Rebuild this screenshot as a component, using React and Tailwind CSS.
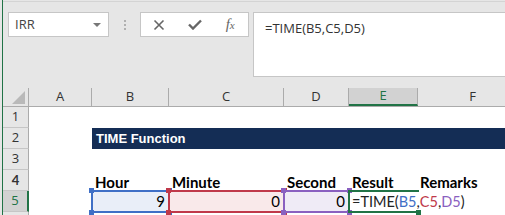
import React from 'react';

const COLS = [
  { key: 'A', w: 'w-[63px]' },
  { key: 'B', w: 'w-[77px]' },
  { key: 'C', w: 'w-[115px]' },
  { key: 'D', w: 'w-[65px]' },
  { key: 'E', w: 'w-[69px]' },
  { key: 'F', w: 'w-[110px]' },
];

const RowHead = ({ n, active }) => (
  <div
    className={
      active
        ? 'w-[26px] shrink-0 h-full flex items-center justify-center bg-[#d2d2d2] text-[#217346] border-r-2 border-r-[#217346] border-b border-b-[#c6c6c6] text-[13px]'
        : 'w-[26px] shrink-0 h-full flex items-center justify-center bg-[#e6e6e6] text-[#333] border-r border-r-[#ababab] border-b border-b-[#c6c6c6] text-[13px]'
    }
  >
    {n}
  </div>
);

const Corner = ({ color, pos }) => (
  <span className={`absolute w-[5px] h-[5px] ${color} ${pos}`} />
);

const RangeCell = ({ w, fill, border, square, value }) => (
  <div className={`relative ${w} shrink-0 h-full ${fill}`}>
    <div className={`absolute -inset-px border-2 ${border}`} />
    <Corner color={square} pos="-top-[3px] -left-[3px]" />
    <Corner color={square} pos="-top-[3px] -right-[3px]" />
    <Corner color={square} pos="-bottom-[3px] -left-[3px]" />
    <Corner color={square} pos="-bottom-[3px] -right-[3px]" />
    <div className="relative h-full flex items-center justify-end pr-[4px] font-['Lato',sans-serif] text-[15px] text-black">
      {value}
    </div>
  </div>
);

export default function App() {
  return (
    <div className="w-[505px] h-[215px] overflow-hidden flex bg-[#e6e6e6] font-['Open_Sans',sans-serif]">
      <div className="w-[2px] shrink-0 bg-[#e6e6e6]" />
      <div className="w-[1px] shrink-0 bg-[#217346]" />
      <div className="flex-1 flex flex-col min-w-0">
        {/* toolbar */}
        <div className="h-[88px] shrink-0 flex flex-col">
          <div className="h-px mt-px bg-[#d4d4d4]" />
          <div className="flex items-start mt-[10px] ml-[5px]">
            <div className="w-[101px] h-[25px] shrink-0 bg-white border border-[#c6c6c6] flex items-center justify-between pl-[6px] pr-[7px]">
              <span className="text-[13px] text-[#444]">IRR</span>
              <span className="w-0 h-0 border-l-[4px] border-r-[4px] border-t-[4px] border-l-transparent border-r-transparent border-t-[#777]" />
            </div>
            <div className="flex flex-col gap-[2px] ml-[15px] mt-[8px]">
              <span className="w-[2px] h-[2px] bg-[#b0b0b0]" />
              <span className="w-[2px] h-[2px] bg-[#b0b0b0]" />
              <span className="w-[2px] h-[2px] bg-[#b0b0b0]" />
            </div>
            <div className="w-[109px] h-[25px] shrink-0 ml-[14px] bg-white border border-[#c6c6c6] flex items-center">
              <div className="w-[36px] flex justify-center">
                <svg width="12" height="12" viewBox="0 0 12 12">
                  <path d="M1.5 1.5 L10.5 10.5 M10.5 1.5 L1.5 10.5" stroke="#666" strokeWidth="1.6" fill="none" />
                </svg>
              </div>
              <div className="w-[36px] flex justify-center">
                <svg width="14" height="11" viewBox="0 0 14 11">
                  <path d="M1 5.5 L5 9.5 L13 1.5" stroke="#666" strokeWidth="2.4" fill="none" />
                </svg>
              </div>
              <div className="w-[36px] flex justify-center items-baseline font-['Liberation_Serif',serif] italic text-[#666]">
                <span className="text-[15px]">f</span>
                <span className="text-[11px]">x</span>
              </div>
            </div>
            <div className="w-[270px] h-[65px] shrink-0 ml-[4px] bg-white border border-[#c6c6c6] pl-[11px] pt-[2px]">
              <span className="text-[13px] leading-[18px] text-[#333]">=TIME(B5,C5,D5)</span>
            </div>
          </div>
        </div>

        {/* column headers */}
        <div className="h-[19px] shrink-0 flex border-b border-[#ababab]">
          <div className="w-[26px] shrink-0 h-full border-r border-[#ababab] flex items-end justify-end pr-[3px] pb-[2px]">
            <svg width="13" height="13" viewBox="0 0 13 13">
              <path d="M13 0 L13 13 L0 13 Z" fill="#b9b9b9" />
            </svg>
          </div>
          {COLS.map((c) =>
            c.key === 'E' ? (
              <div key={c.key} className={`${c.w} shrink-0 h-full bg-[#d2d2d2] border-r border-[#ababab] border-b-2 border-b-[#217346] flex items-center justify-center text-[13px] text-[#217346]`}>
                {c.key}
              </div>
            ) : (
              <div key={c.key} className={`${c.w} shrink-0 h-full border-r border-[#ababab] flex items-center justify-center text-[13px] text-[#333]`}>
                {c.key}
              </div>
            )
          )}
        </div>

        {/* rows */}
        <div className="flex-1 flex flex-col bg-white">
          <div className="h-[21px] shrink-0 flex">
            <RowHead n="1" />
          </div>
          <div className="h-[21px] shrink-0 flex">
            <RowHead n="2" />
            <div className="w-[63px] shrink-0" />
            <div className="flex-1 bg-[#142d55] flex items-center pl-[4px] font-['Liberation_Sans',sans-serif] font-bold text-[13px] text-white">
              TIME Function
            </div>
          </div>
          <div className="h-[21px] shrink-0 flex">
            <RowHead n="3" />
          </div>
          <div className="h-[21px] shrink-0 flex font-['Lato',sans-serif] font-bold text-[15px] leading-[18px] text-black">
            <RowHead n="4" />
            <div className="w-[63px] shrink-0" />
            <div className="w-[77px] shrink-0 flex items-end pl-[3px]">Hour</div>
            <div className="w-[115px] shrink-0 flex items-end pl-[3px]">Minute</div>
            <div className="w-[65px] shrink-0 flex items-end pl-[3px]">Second</div>
            <div className="w-[69px] shrink-0 flex items-end pl-[3px]">Result</div>
            <div className="w-[110px] shrink-0 flex items-end pl-[2px]">Remarks</div>
          </div>
          <div className="h-[21px] shrink-0 flex">
            <RowHead n="5" active />
            <div className="w-[63px] shrink-0" />
            <RangeCell w="w-[77px]" fill="bg-[#e9eef8]" border="border-[#3f6fc6]" square="bg-[#3f6fc6]" value="9" />
            <RangeCell w="w-[115px]" fill="bg-[#f9e9ea]" border="border-[#c0394a]" square="bg-[#c0394a]" value="0" />
            <RangeCell w="w-[65px]" fill="bg-[#efebf6]" border="border-[#8a60c0]" square="bg-[#8a60c0]" value="0" />
            <div className="relative w-[69px] shrink-0 h-full">
              <div className="absolute -inset-px border-2 border-r-0 border-[#217346]" />
              <Corner color="bg-[#217346]" pos="-bottom-[3px] -right-[3px]" />
              <div className="relative h-full flex items-center pl-[3px] whitespace-nowrap font-['Lato',sans-serif] text-[14.5px] text-[#222]">
                <span>=TIME(</span>
                <span className="text-[#3f6fc6]">B5</span>
                <span>,</span>
                <span className="text-[#c0394a]">C5</span>
                <span>,</span>
                <span className="text-[#8a60c0]">D5</span>
                <span>)</span>
                <span className="inline-block w-[2px] h-[17px] bg-black ml-[2px]" />
              </div>
            </div>
          </div>
          <div className="h-[21px] shrink-0 flex">
            <RowHead n="" />
          </div>
        </div>
      </div>
    </div>
  );
}
